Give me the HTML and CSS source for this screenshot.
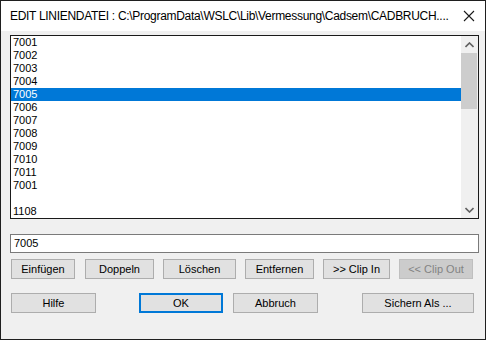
FILE: index.html
```html
<!DOCTYPE html>
<html>
<head>
<meta charset="utf-8">
<link rel="stylesheet" href="styles.css">
</head>
<body>
<div class="window">
  <div class="titlebar">
    <span class="title">EDIT LINIENDATEI : C:\ProgramData\WSLC\Lib\Vermessung\Cadsem\CADBRUCH....</span>
    <svg class="close" width="12" height="12" viewBox="0 0 12 12"><path d="M1 1 L11 11 M11 1 L1 11" stroke="#1a1a1a" stroke-width="1.1" fill="none"/></svg>
  </div>
  <div class="content">
    <div class="listbox">
      <ul class="items">
        <li>7001</li>
        <li>7002</li>
        <li>7003</li>
        <li>7004</li>
        <li class="sel">7005</li>
        <li>7006</li>
        <li>7007</li>
        <li>7008</li>
        <li>7009</li>
        <li>7010</li>
        <li>7011</li>
        <li>7001</li>
        <li>&nbsp;</li>
        <li>1108</li>
      </ul>
      <div class="scrollbar">
        <div class="arrow"><svg width="9" height="6" viewBox="0 0 9 6"><path d="M0.5 5 L4.5 1 L8.5 5" stroke="#606060" stroke-width="1.6" fill="none"/></svg></div>
        <div class="track"><div class="thumb"></div></div>
        <div class="arrow"><svg width="9" height="6" viewBox="0 0 9 6"><path d="M0.5 1 L4.5 5 L8.5 1" stroke="#606060" stroke-width="1.6" fill="none"/></svg></div>
      </div>
    </div>
    <div class="textbox">7005</div>
    <div class="row row1">
      <div class="btn w64">Einfügen</div>
      <div class="btn w69">Doppeln</div>
      <div class="btn w73">Löschen</div>
      <div class="btn w69">Entfernen</div>
      <div class="btn w67">&gt;&gt; Clip In</div>
      <div class="btn w74 disabled">&lt;&lt; Clip Out</div>
    </div>
    <div class="row row2">
      <div class="btn w85">Hilfe</div>
      <div class="btn w84 ok">OK</div>
      <div class="btn w85">Abbruch</div>
      <div class="btn w112">Sichern Als ...</div>
    </div>
  </div>
</div>
</body>
</html>
```

FILE: styles.css
```css
html, body {
  margin: 0;
  padding: 0;
  background: #f0f0f0;
}
.window {
  width: 486px;
  height: 340px;
  box-sizing: border-box;
  border: 1px solid #1f1f1f;
  background: #f0f0f0;
  display: flex;
  flex-direction: column;
  overflow: hidden;
}
.titlebar {
  height: 30px;
  background: #ffffff;
  display: flex;
  align-items: center;
  padding-left: 9px;
  position: relative;
  flex: none;
}
.title {
  font-family: "Liberation Sans", Arial, sans-serif;
  font-size: 12px;
  color: #000;
  white-space: nowrap;
  letter-spacing: -0.3px;
}
.close {
  position: absolute;
  left: 462px;
  top: 9px;
}
.content {
  padding: 4px 6px 0 9px;
  font-family: "Liberation Sans", Arial, sans-serif;
  font-size: 11px;
  color: #000;
}
.listbox {
  width: 469px;
  height: 184px;
  box-sizing: border-box;
  border: 1px solid #1a1a1a;
  background: #fff;
  display: flex;
}
.items {
  list-style: none;
  margin: 0;
  padding: 0;
  width: 450px;
  flex: none;
}
.items li {
  height: 13px;
  line-height: 13px;
  padding-left: 2px;
  white-space: nowrap;
}
.items li.sel {
  background: #0078d7;
  color: #fff;
}
.scrollbar {
  width: 17px;
  flex: none;
  background: #f0f0f0;
  display: flex;
  flex-direction: column;
}
.arrow {
  height: 17px;
  display: flex;
  align-items: center;
  justify-content: center;
  flex: none;
}
.track {
  flex: 1;
}
.thumb {
  height: 56px;
  background: #cdcdcd;
  margin: 0 1px 0 0;
}
.textbox {
  margin-top: 15px;
  width: 469px;
  height: 19px;
  box-sizing: border-box;
  border: 1px solid #7a7a7a;
  background: #fff;
  padding-left: 3px;
  line-height: 17px;
}
.row {
  display: flex;
  gap: 9px;
  padding-left: 1px;
}
.row1 {
  margin-top: 6px;
}
.row1 .btn:nth-child(2) { margin-left: 1px; }
.row2 {
  margin-top: 14px;
}
.btn {
  height: 20px;
  box-sizing: border-box;
  border: 1px solid #adadad;
  background: #e1e1e1;
  text-align: center;
  line-height: 18px;
  white-space: nowrap;
}
.btn.disabled {
  background: #cccccc;
  border-color: #bfbfbf;
  color: #838383;
}
.btn.ok {
  border: 2px solid #0078d7;
  line-height: 16px;
}
.w64 { width: 64px; }
.w69 { width: 69px; }
.w73 { width: 73px; }
.w67 { width: 67px; }
.w74 { width: 74px; }
.w85 { width: 85px; }
.w84 { width: 84px; }
.w112 { width: 112px; }
.row2 .btn:nth-child(2) { margin-left: 34px; }
.row2 .btn:nth-child(3) { margin-left: 1px; }
.row2 .btn:nth-child(4) { margin-left: 35px; }
```
